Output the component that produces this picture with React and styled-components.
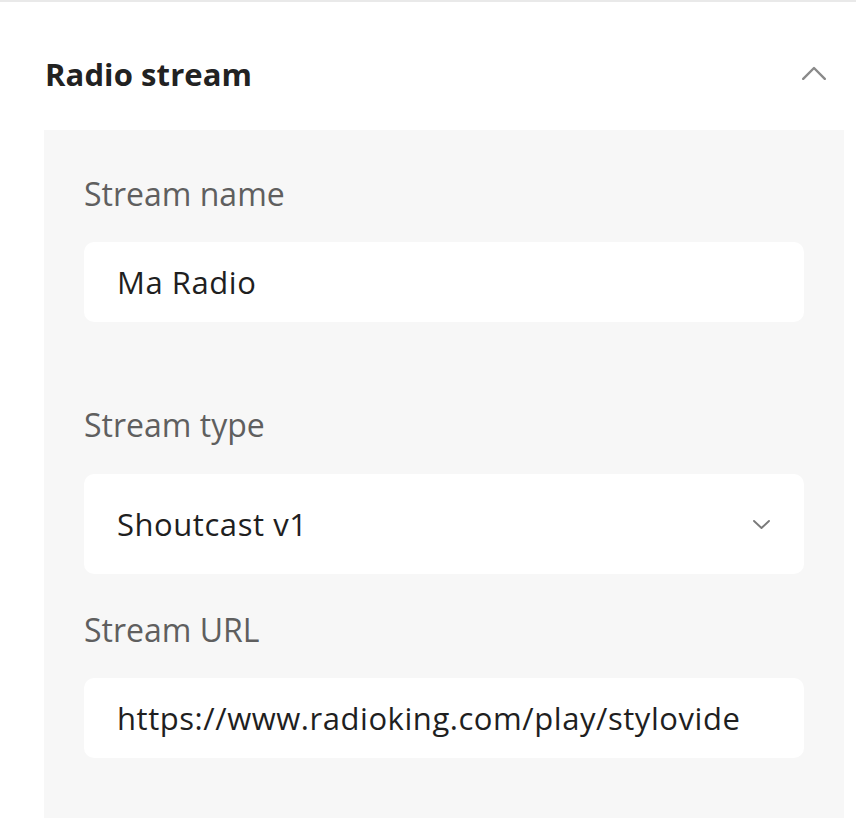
import React from "react";
import styled, { createGlobalStyle } from "styled-components";

const Global = createGlobalStyle`
  html, body { margin: 0; padding: 0; background: #ffffff; }
  body { font-family: "Open Sans", "Noto Sans", sans-serif; -webkit-font-smoothing: antialiased; }
  * { box-sizing: border-box; }
`;

const Page = styled.div`
  width: 856px;
  height: 818px;
  overflow: hidden;
  border-top: 2px solid #e9e9e9;
`;

const Header = styled.div`
  display: flex;
  align-items: flex-start;
  justify-content: space-between;
  height: 128px;
  padding: 0 30px 0 45px;
`;

const Title = styled.h2`
  margin: 52px 0 0;
  font-size: 31px;
  line-height: 40px;
  font-weight: 700;
  color: #222222;
  letter-spacing: 0.1px;
`;

const Toggle = styled.button`
  border: 0;
  background: none;
  padding: 0;
  width: 24px;
  height: 14px;
  display: flex;
  margin-top: 64px;
  cursor: pointer;
`;

const Panel = styled.section`
  margin: 0 12px 0 44px;
  background: #f7f7f7;
  padding: 46px 40px 80px;
  min-height: 700px;
`;

const Field = styled.div`
  display: flex;
  flex-direction: column;
  gap: ${(p) => p.$gap}px;
  margin-bottom: ${(p) => p.$after}px;
`;

const Label = styled.label`
  font-size: 32px;
  line-height: 36px;
  color: #5f5f5f;
  font-weight: 400;
`;

const Box = styled.div`
  height: ${(p) => p.$h}px;
  background: #ffffff;
  border-radius: 10px;
  display: flex;
  align-items: center;
  justify-content: space-between;
  padding: 0 34px 0 33px;
  font-size: 31px;
  letter-spacing: 0.55px;
  color: #1f1f1f;
  white-space: nowrap;
`;

const ChevronUp = () => (
  <svg width="24" height="14" viewBox="0 0 24 14" fill="none">
    <polyline points="1.2,12.8 12,2 22.8,12.8" stroke="#8a8a8a" strokeWidth="2.4" strokeLinecap="round" strokeLinejoin="round" />
  </svg>
);

const ChevronDown = () => (
  <svg width="17" height="9" viewBox="0 0 17 9" fill="none">
    <polyline points="1,1 8.5,8 16,1" stroke="#7a7a7a" strokeWidth="1.9" strokeLinecap="round" strokeLinejoin="round" />
  </svg>
);

export default function App() {
  return (
    <>
      <Global />
      <Page>
        <Header>
          <Title>Radio stream</Title>
          <Toggle aria-label="Collapse">
            <ChevronUp />
          </Toggle>
        </Header>
        <Panel>
          <Field $gap={30} $after={85}>
            <Label>Stream name</Label>
            <Box $h={80}>Ma Radio</Box>
          </Field>
          <Field $gap={31} $after={38}>
            <Label>Stream type</Label>
            <Box $h={100}>
              <span>Shoutcast v1</span>
              <ChevronDown />
            </Box>
          </Field>
          <Field $gap={30} $after={0}>
            <Label>Stream URL</Label>
            <Box $h={80}>https://www.radioking.com/play/stylovide</Box>
          </Field>
        </Panel>
      </Page>
    </>
  );
}
